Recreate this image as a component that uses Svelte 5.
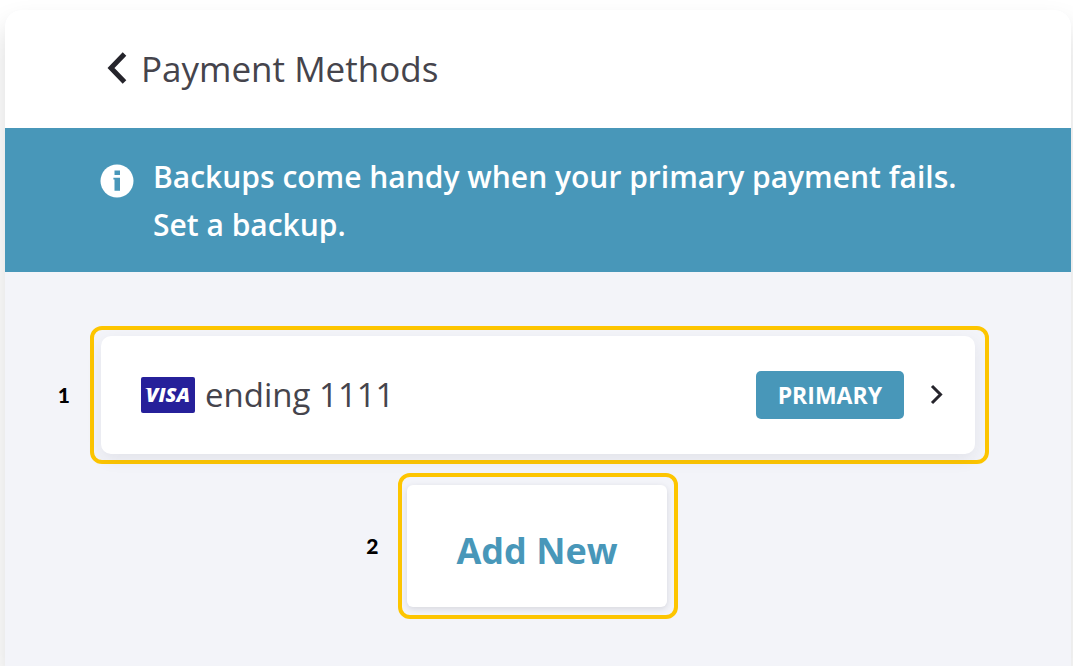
<script>
  const card = { brand: 'VISA', label: 'ending 1111', status: 'PRIMARY' };
</script>

<main class="panel">
  <header class="header">
    <button class="back" type="button" aria-label="Back">
      <svg width="22" height="34" viewBox="0 0 22 34" aria-hidden="true">
        <path d="M19.5 2 L6 16 L19.5 30" fill="none" stroke="currentColor" stroke-width="5" />
      </svg>
    </button>
    <h1>Payment Methods</h1>
  </header>

  <section class="notice">
    <svg width="34" height="34" viewBox="0 0 34 34" aria-hidden="true">
      <circle cx="17" cy="17" r="16.5" fill="#fff" />
      <path d="M14.5 6.5h5.5v4.6h-5.5zM13.4 13.8h6.6v13h-5.5v-11.4h-1.1z" fill="#4897b9" />
    </svg>
    <p>Backups come handy when your primary payment fails.<br />Set a backup.</p>
  </section>

  <section class="methods">
    <div class="row wide">
      <span class="number">1</span>
      <div class="frame">
        <button class="method" type="button">
          <svg width="54" height="36" viewBox="0 0 54 36" aria-hidden="true">
            <rect width="54" height="36" rx="2" fill="#26209a" />
            <path d="M4 11h5l1 3z" fill="#fff" />
            <text x="27" y="25" text-anchor="middle" class="brand">{card.brand}</text>
          </svg>
          <span class="label">{card.label}</span>
          <span class="status">{card.status}</span>
          <svg class="chevron" width="14" height="22" viewBox="0 0 14 22" aria-hidden="true">
            <path d="M2 2 L10.5 10.5 L2 19" fill="none" stroke="currentColor" stroke-width="3" />
          </svg>
        </button>
      </div>
    </div>

    <div class="row">
      <span class="number">2</span>
      <div class="frame compact">
        <button class="add" type="button">Add New</button>
      </div>
    </div>
  </section>
</main>

<style>
  :global(body) {
    margin: 0;
    background: #fff;
  }

  .panel {
    box-sizing: border-box;
    display: flex;
    flex-direction: column;
    min-height: calc(100vh - 10px);
    margin: 10px 2px 0 5px;
    border-radius: 16px 16px 0 0;
    background: #f3f4f9;
    box-shadow: 0 16px 28px rgba(0, 0, 0, 0.15);
    font-family: "Open Sans", "Noto Sans", sans-serif;
    color: #45444c;
  }

  button {
    border: 0;
    font-family: inherit;
    color: inherit;
    cursor: pointer;
  }

  .header {
    display: flex;
    align-items: center;
    gap: 14px;
    padding: 32px 100px;
    border-radius: 16px 16px 0 0;
    background: #fff;
  }

  .back {
    display: flex;
    padding: 0;
    color: #25242b;
    background: none;
  }

  h1 {
    margin: 0;
    font-size: 35px;
    line-height: 54px;
    font-weight: 400;
  }

  .notice {
    display: flex;
    gap: 19px;
    padding: 25px 95px 23px;
    background: #4897b9;
    color: #fff;
  }

  .notice svg {
    flex: none;
    margin-top: 11px;
  }

  .notice p {
    margin: 0;
    font-size: 30px;
    line-height: 48px;
    font-weight: 600;
  }

  .methods {
    display: grid;
    gap: 9px;
    padding: 54px 0 48px;
  }

  .row {
    display: grid;
    grid-template-columns: 1fr auto 1fr;
    align-items: center;
  }

  .wide {
    grid-template-columns: 85px 1fr 82px;
  }

  .number {
    justify-self: end;
    margin-right: 20px;
    font-family: Lato, sans-serif;
    font-size: 21px;
    line-height: 24px;
    font-weight: 900;
    color: #000;
  }

  .frame {
    padding: 6px 10px 6px 7px;
    border: 4px solid #fdc500;
    border-radius: 12px;
  }

  .compact {
    padding: 8px 7px 8px 5px;
  }

  .method {
    display: flex;
    align-items: center;
    width: 100%;
    padding: 35px 31px 35px 40px;
    border-radius: 10px;
    background: #fff;
    box-shadow: 0 6px 16px rgba(40, 40, 60, 0.08);
  }

  .brand {
    font-size: 20px;
    font-weight: 800;
    font-style: italic;
    fill: #fff;
  }

  .label {
    margin-left: 10px;
    font-size: 33px;
    line-height: 48px;
    font-weight: 400;
  }

  .status {
    margin-left: auto;
    padding: 0 22px;
    border-radius: 5px;
    background: #4897b9;
    font-size: 23px;
    line-height: 48px;
    font-weight: 700;
    color: #fff;
  }

  .chevron {
    margin-left: 26px;
    color: #25242b;
  }

  .add {
    padding: 43px 49px 33px;
    border-radius: 6px;
    background: #fff;
    box-shadow: 0 2px 6px rgba(40, 40, 60, 0.14);
    font-size: 36px;
    line-height: 46px;
    font-weight: 700;
    color: #4897b9;
  }
</style>
